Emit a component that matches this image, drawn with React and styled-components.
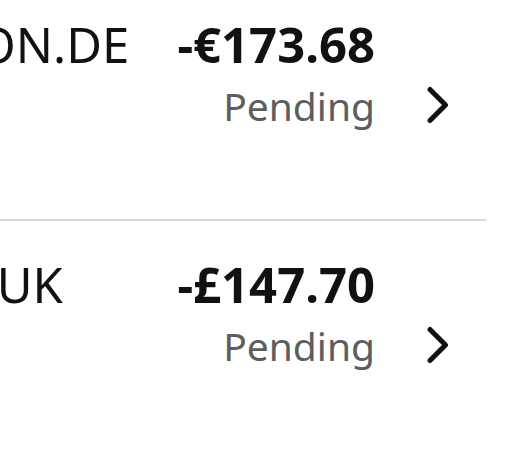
import styled, { createGlobalStyle } from "styled-components";

const GlobalStyle = createGlobalStyle`
  html, body {
    margin: 0;
    padding: 0;
    background: #ffffff;
    overflow: hidden;
  }
  body {
    font-family: "Noto Sans", "Open Sans", sans-serif;
    color: #111111;
  }
`;

const transactions = [
  { id: 1, merchant: "AMAZON.DE", amount: "-€173.68", status: "Pending" },
  { id: 2, merchant: "AMZN UK", amount: "-£147.70", status: "Pending" },
];

const Chevron = () => (
  <svg width="24" height="38" viewBox="0 0 24 38" fill="none">
    <polyline
      points="4,3.5 19.5,19 4,34.5"
      stroke="#111111"
      strokeWidth="5"
      strokeLinecap="round"
      strokeLinejoin="round"
    />
  </svg>
);

const App = () => {
  return (
    <>
      <GlobalStyle />
      <List>
        {transactions.map((t) => (
          <Row key={t.id}>
            <Merchant>{t.merchant}</Merchant>
            <Details>
              <Amount>{t.amount}</Amount>
              <span />
              <Status>{t.status}</Status>
              <ChevronBox>
                <Chevron />
              </ChevronBox>
            </Details>
          </Row>
        ))}
      </List>
    </>
  );
};

export default App;

const List = styled.div`
  margin: -19px 36px 0 -157px;
  display: flex;
  flex-direction: column;
`;

const Row = styled.div`
  display: flex;
  align-items: flex-start;
  padding: 33px 36px 89px 0;
  border-bottom: 2px solid #d9d9d9;

  &:last-child {
    border-bottom: none;
  }
`;

const Merchant = styled.div`
  flex: 1;
  font-size: 49px;
  line-height: 60px;
  font-weight: 400;
  white-space: nowrap;
  color: #111111;
`;

const Details = styled.div`
  display: grid;
  grid-template-columns: auto 24px;
  column-gap: 51px;
  row-gap: 8px;
  justify-items: end;
`;

const Amount = styled.div`
  font-size: 49px;
  line-height: 60px;
  font-weight: 700;
  white-space: nowrap;
  color: #111111;
`;

const Status = styled.div`
  font-size: 39px;
  line-height: 48px;
  color: #5d5d5d;
`;

const ChevronBox = styled.div`
  align-self: center;
  display: flex;
  margin-top: -3px;
`;
